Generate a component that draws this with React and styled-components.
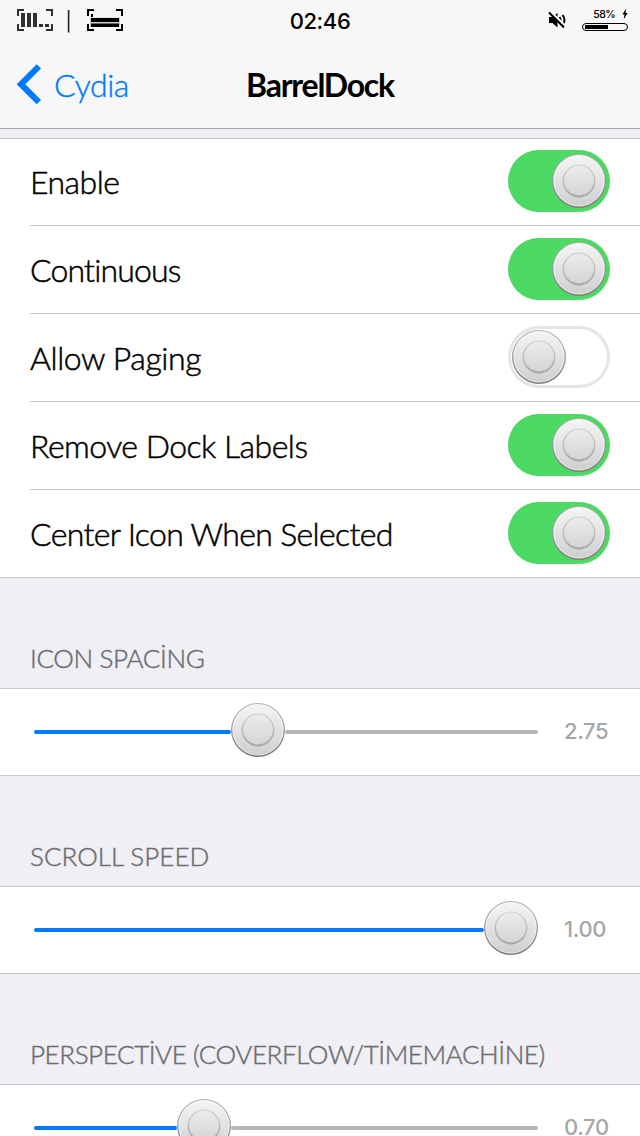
import React from 'react';
import styled, { createGlobalStyle } from 'styled-components';

const Colors = {
  tint: '#007aff',
  on: '#4cd964',
  bar: '#f7f7f7',
  page: '#efeff4',
  line: '#c8c7cc',
  track: '#b5b5b5',
  header: '#6d6d72',
  value: '#a6a6a6',
};

const GlobalStyle = createGlobalStyle`
  * {
    box-sizing: border-box;
  }

  body {
    margin: 0;
    background-color: ${Colors.page};
    font-family: Lato, 'Liberation Sans', sans-serif;
  }
`;

const Screen = styled.div`
  width: 640px;
  height: 1136px;
  overflow: hidden;
  background-color: ${Colors.page};
`;

const TopBar = styled.header`
  height: 129px;
  background-color: ${Colors.bar};
  border-bottom: 1px solid #a7a7aa;
`;

const StatusBar = styled.div`
  display: grid;
  grid-template-columns: 1fr auto 1fr;
  height: 40px;
  padding: 0 12px 0 12px;
`;

const StatusLeft = styled.div`
  display: flex;
  padding: 8px 0 0 4px;
`;

const Clock = styled.div`
  padding-top: 2px;
  font-family: Inter, sans-serif;
  font-size: 22px;
  font-weight: 500;
  line-height: 38px;
  letter-spacing: -0.4px;
`;

const StatusRight = styled.div`
  display: flex;
  justify-content: flex-end;
  gap: 15px;
  padding-top: 8px;
`;

const Battery = styled.div`
  display: flex;
  flex-direction: column;
  width: 46px;
`;

const BatteryText = styled.div`
  display: flex;
  justify-content: flex-end;
  gap: 7px;
  height: 14px;
  font-family: Inter, sans-serif;
  font-size: 10.5px;
  font-weight: 500;
  line-height: 13px;
  letter-spacing: -0.6px;
`;

const BatteryShell = styled.div`
  height: 8px;
  margin-top: 1px;
  padding: 1px 2px;
  border: 1.5px solid #000;
  border-radius: 4px;
`;

const BatteryLevel = styled.div`
  height: 4px;
  background-color: #000;
`;

const NavBar = styled.nav`
  display: grid;
  grid-template-columns: 1fr auto 1fr;
  height: 88px;
`;

const BackButton = styled.div`
  display: flex;
  padding: 24px 0 0 16px;
  color: ${Colors.tint};
  font-size: 32px;
  font-weight: 300;
  line-height: 41px;
  letter-spacing: -0.4px;
  -webkit-text-stroke: 0.4px ${Colors.tint};

  & > svg {
    margin-right: 12px;
  }
`;

const Title = styled.h1`
  margin: 0;
  padding-top: 24px;
  font-size: 32px;
  font-weight: 700;
  line-height: 42px;
  letter-spacing: -1.25px;
`;

const Content = styled.main`
  padding-top: 9px;
`;

const Group = styled.section`
  background-color: #fff;
  box-shadow: inset 0 1px ${Colors.line}, inset 0 -1px ${Colors.line};
`;

const SwitchRow = styled.div`
  display: flex;
  justify-content: space-between;
  align-items: flex-start;
  height: 88px;
  margin-left: 30px;
  padding: 12px 30px 0 0;
  border-bottom: 1px solid ${Colors.line};

  &:last-child {
    border-bottom-color: transparent;
  }
`;

const Label = styled.span`
  font-size: 32px;
  font-weight: 300;
  line-height: 64px;
  letter-spacing: ${(p) => p.$tracking}px;
  -webkit-text-stroke: 0.5px #000;
`;

const SwitchTrack = styled.div`
  display: flex;
  justify-content: ${(p) => (p.$on ? 'flex-end' : 'flex-start')};
  width: 102px;
  height: 62px;
  padding: ${(p) => (p.$on ? '4px 4px' : '3.5px 4px')};
  border-radius: 31px;
  background-color: ${(p) => (p.$on ? Colors.on : '#fff')};
  box-shadow: ${(p) => (p.$on ? 'none' : 'inset 0 0 0 3px #e5e5e5')};
`;

const GroupHeader = styled.h2`
  height: 110px;
  margin: 0;
  padding: 60px 0 0 30px;
  color: ${Colors.header};
  font-size: 26px;
  font-weight: 300;
  line-height: 40px;
  letter-spacing: ${(p) => p.$tracking}px;
  white-space: nowrap;
  -webkit-text-stroke: 0.45px ${Colors.header};
`;

const SliderRow = styled.div`
  display: flex;
  align-items: flex-start;
  height: 88px;
  padding: 15px 0 0 34px;
`;

const Slider = styled.div`
  display: flex;
  align-items: center;
  width: 504px;
  height: 54px;
`;

const SliderLine = styled.div`
  height: 4px;
  margin-top: 4px;
  border-radius: 2px;
  background-color: ${(p) => (p.$filled ? Colors.tint : Colors.track)};
  ${(p) => !p.$filled && 'flex: 1;'}
`;

const Value = styled.span`
  margin-left: 26px;
  color: ${Colors.value};
  font-family: Inter, sans-serif;
  font-size: 22px;
  font-weight: 500;
  line-height: 56px;
  letter-spacing: -0.4px;
`;

const KnobSvg = styled.svg`
  flex: none;
  display: block;
`;

const Knob = () => (
  <KnobSvg width="54" height="54" viewBox="0 0 54 54">
    <defs>
      <linearGradient id="rim" x1="0" y1="0" x2="0" y2="1">
        <stop offset="0" stopColor="#b4b4b4" />
        <stop offset="0.6" stopColor="#929292" />
        <stop offset="1" stopColor="#7c7c7c" />
      </linearGradient>
      <linearGradient id="face" x1="0" y1="0" x2="0" y2="1">
        <stop offset="0" stopColor="#f4f4f4" />
        <stop offset="0.5" stopColor="#e2e2e2" />
        <stop offset="1" stopColor="#cfcfcf" />
      </linearGradient>
      <linearGradient id="ring" x1="0" y1="0" x2="0" y2="1">
        <stop offset="0" stopColor="#c6c6c6" />
        <stop offset="1" stopColor="#9a9a9a" />
      </linearGradient>
      <linearGradient id="cap" x1="0" y1="0" x2="0" y2="1">
        <stop offset="0" stopColor="#ececec" />
        <stop offset="1" stopColor="#d4d4d4" />
      </linearGradient>
    </defs>
    <circle cx="27" cy="27" r="27" fill="url(#rim)" />
    <circle cx="27" cy="26.7" r="25.7" fill="#f6f6f6" />
    <circle cx="27" cy="27" r="24.8" fill="url(#face)" />
    <circle cx="27" cy="27" r="16.4" fill="url(#ring)" opacity="0.8" />
    <circle cx="27" cy="26.5" r="15" fill="url(#cap)" />
  </KnobSvg>
);

const Switch = ({ on }) => (
  <SwitchTrack $on={on}>
    <Knob />
  </SwitchTrack>
);

const SignalIcons = () => (
  <svg width="110" height="26" viewBox="16 8 110 26">
    <path
      d="M24 10H18V16M46 10H52V16M18 24V30H24M52 24V30H46"
      fill="none"
      stroke="#303030"
      strokeWidth="2"
    />
    <path
      fill="#303030"
      d="M21 13h4v14h-4zM27 13h4v14h-4zM33 13h4v14h-4zM39 24h4v3h-4zM45 24h4v3h-4z"
    />
    <path d="M68.6 10V32.5" stroke="#222" strokeWidth="1.6" />
    <path
      d="M94 10H88V16M116 10H122V16M88 24V30H94M122 24V30H116"
      fill="none"
      stroke="#000"
      strokeWidth="2"
    />
    <path d="M90 17.5h30v9.5h-30z" fill="#ccc" />
    <path d="M91 14h2v3h-2zM91 18h28v4h-28zM91 23.5h28v3.5h-28z" />
  </svg>
);

const MuteIcon = () => (
  <svg width="19" height="24" viewBox="548 8 19 24">
    <path d="M549 17h3.500l5-4v14.500l-5-4.500H549z" />
    <path
      d="M559.500 17q2 3 0 6M562.500 15q4 5 0 10.500"
      fill="none"
      stroke="#000"
      strokeWidth="2"
    />
    <path d="M550.500 11.500L566 26.500" stroke={Colors.bar} strokeWidth="2.200" />
    <path d="M549 12.500L564 27.500" stroke="#000" strokeWidth="1.900" />
  </svg>
);

const BoltIcon = () => (
  <svg width="6" height="12" viewBox="0 0 6 12">
    <path d="M4.300 0.500L0.400 6.500H2.500L1.700 11.500L5.600 4.900H3.500z" />
  </svg>
);

const switches = [
  { label: 'Enable', on: true, tracking: -0.5 },
  { label: 'Continuous', on: true, tracking: -0.85 },
  { label: 'Allow Paging', on: false, tracking: -0.4 },
  { label: 'Remove Dock Labels', on: true, tracking: -0.53 },
  { label: 'Center Icon When Selected', on: true, tracking: -0.66 },
];

// fill is the length of the line left of the knob
const sliders = [
  { title: 'ICON SPACİNG', value: '2.75', fill: 196.5, tracking: -0.35 },
  { title: 'SCROLL SPEED', value: '1.00', fill: 450.5, tracking: 0 },
  {
    title: 'PERSPECTİVE (COVERFLOW/TİMEMACHİNE)',
    value: '0.70',
    fill: 142.5,
    tracking: -0.42,
  },
];

const App = () => {
  return (
    <Screen>
      <GlobalStyle />
      <TopBar>
        <StatusBar>
          <StatusLeft>
            <SignalIcons />
          </StatusLeft>
          <Clock>02:46</Clock>
          <StatusRight>
            <MuteIcon />
            <Battery>
              <BatteryText>
                58% <BoltIcon />
              </BatteryText>
              <BatteryShell>
                <BatteryLevel style={{ width: '58%' }} />
              </BatteryShell>
            </Battery>
          </StatusRight>
        </StatusBar>
        <NavBar>
          <BackButton>
            <svg width="26" height="41" viewBox="16 64 26 41">
              <path
                fill={Colors.tint}
                d="M36.700 64.300L41 68.600L25.300 84.300L41 100L36.700 104.300L16.700 84.300z"
              />
            </svg>
            Cydia
          </BackButton>
          <Title>BarrelDock</Title>
        </NavBar>
      </TopBar>
      <Content>
        <Group>
          {switches.map(({ label, on, tracking }) => (
            <SwitchRow key={label}>
              <Label $tracking={tracking}>{label}</Label>
              <Switch on={on} />
            </SwitchRow>
          ))}
        </Group>
        {sliders.map(({ title, value, fill, tracking }) => (
          <React.Fragment key={title}>
            <GroupHeader $tracking={tracking}>{title}</GroupHeader>
            <Group>
              <SliderRow>
                <Slider>
                  <SliderLine $filled style={{ width: fill }} />
                  <Knob />
                  <SliderLine />
                </Slider>
                <Value>{value}</Value>
              </SliderRow>
            </Group>
          </React.Fragment>
        ))}
      </Content>
    </Screen>
  );
};

export default App;
